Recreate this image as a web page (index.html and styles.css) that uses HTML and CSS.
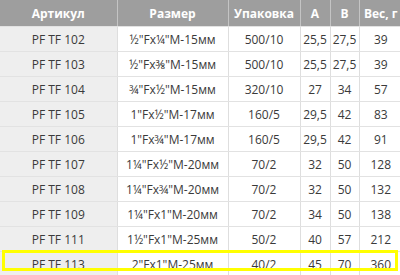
FILE: index.html
```html
<!DOCTYPE html>
<html lang="ru">
<head>
<meta charset="utf-8">
<link rel="stylesheet" href="styles.css">
</head>
<body>
<table class="spec">
  <colgroup>
    <col class="c-art"><col class="c-size"><col class="c-pack"><col class="c-a"><col class="c-b"><col class="c-w">
  </colgroup>
  <thead>
    <tr><th>Артикул</th><th>Размер</th><th>Упаковка</th><th>A</th><th>B</th><th>Вес, г</th></tr>
  </thead>
  <tbody>
    <tr><td>PF TF 102</td><td>½"Fx¼"M-15мм</td><td>500/10</td><td>25,5</td><td>27,5</td><td>39</td></tr>
    <tr><td>PF TF 103</td><td>½"Fx⅜"M-15мм</td><td>500/10</td><td>25,5</td><td>27,5</td><td>39</td></tr>
    <tr><td>PF TF 104</td><td>¾"Fx½"M-15мм</td><td>320/10</td><td>27</td><td>34</td><td>57</td></tr>
    <tr><td>PF TF 105</td><td>1"Fx½"M-17мм</td><td>160/5</td><td>29,5</td><td>42</td><td>83</td></tr>
    <tr><td>PF TF 106</td><td>1"Fx¾"M-17мм</td><td>160/5</td><td>29,5</td><td>42</td><td>91</td></tr>
    <tr><td>PF TF 107</td><td>1¼"Fx½"M-20мм</td><td>70/2</td><td>32</td><td>50</td><td>128</td></tr>
    <tr><td>PF TF 108</td><td>1¼"Fx¾"M-20мм</td><td>70/2</td><td>32</td><td>50</td><td>132</td></tr>
    <tr><td>PF TF 109</td><td>1¼"Fx1"M-20мм</td><td>70/2</td><td>34</td><td>50</td><td>138</td></tr>
    <tr><td>PF TF 111</td><td>1½"Fx1"M-25мм</td><td>50/2</td><td>40</td><td>57</td><td>212</td></tr>
    <tr class="hl"><td>PF TF 113</td><td>2"Fx1"M-25мм</td><td>40/2</td><td>45</td><td>70</td><td>360</td></tr>
  </tbody>
</table>
</body>
</html>
```
FILE: styles.css
```css
html, body {
  margin: 0;
  padding: 0;
  overflow: hidden;
  background: #ffffff;
}
.spec {
  border-collapse: collapse;
  table-layout: fixed;
  width: 402px;
  font-family: "Open Sans", "Liberation Sans", sans-serif;
  font-size: 12px;
  color: #3a3a3a;
}
.c-art { width: 117px; }
.c-size { width: 111px; }
.c-pack { width: 72px; }
.c-a { width: 30px; }
.c-b { width: 29px; }
.c-w { width: 43px; }
.spec th {
  height: 26px;
  padding: 0;
  background: #9e9e9e;
  color: #ffffff;
  font-weight: 700;
  font-size: 12px;
  text-align: center;
  border-left: 1px solid #c4c4c4;
  border-bottom: 1px solid #e2e2e2;
  white-space: nowrap;
}
.spec th:first-child { border-left: none; }
.spec td {
  height: 24px;
  padding: 0;
  text-align: center;
  white-space: nowrap;
  border-left: 1px solid #dedede;
  border-bottom: 1px solid #e2e2e2;
}
.spec td:first-child {
  border-left: none;
  background: #eeeeee;
}
.hl td:first-child {
  position: relative;
}
.hl td:first-child::after {
  content: "";
  position: absolute;
  left: 2px;
  top: -2px;
  width: 396px;
  height: 21px;
  box-sizing: border-box;
  border: 3px solid #ffff00;
}
```
